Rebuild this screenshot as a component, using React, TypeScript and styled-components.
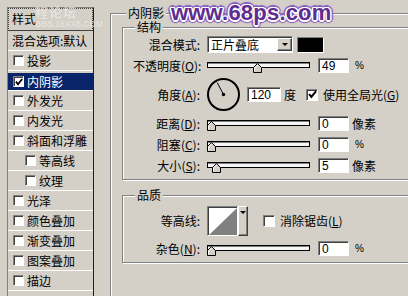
import React from "react";
import styled, { createGlobalStyle } from "styled-components";

const FACE = "#d4d0c8";
const CJK = '"Noto Sans CJK SC", "Noto Sans", sans-serif';

const GlobalStyle = createGlobalStyle`
  html, body { margin: 0; padding: 0; background: ${FACE}; }
  body { font-family: ${CJK}; font-size: 12px; color: #000; overflow: hidden; }
  * { box-sizing: border-box; }
`;

const Dialog = styled.div`
  position: relative;
  width: 408px;
  height: 296px;
  overflow: hidden;
  display: flex;
  background: ${FACE};
`;

/* ---------- left list ---------- */
const LeftPane = styled.div`
  width: 97px;
  flex-shrink: 0;
  padding: 7px 0 0 7px;
`;

const StyleList = styled.div`
  width: 87px;
  height: 300px;
  border-left: 1px solid #808080;
  border-top: 1px solid #808080;
  border-right: 1px solid #202020;
  display: flex;
  flex-direction: column;
`;

const ListHeader = styled.div`
  height: 23px;
  flex-shrink: 0;
  border-bottom: 1px solid #404040;
  outline: 1px dotted #404040;
  outline-offset: -1px;
  display: flex;
  align-items: center;
  padding-left: 4px;
  line-height: 1;
`;

const ListRow = styled.div<{ $pad: number; $selected?: boolean }>`
  height: 20px;
  flex-shrink: 0;
  border-bottom: 1px solid #fff;
  display: flex;
  align-items: center;
  gap: 3px;
  padding-left: ${(p) => p.$pad}px;
  line-height: 1;
  white-space: nowrap;
  color: ${(p) => (p.$selected ? "#fff" : "#000")};
  background: ${(p) => (p.$selected ? "#0a246a" : "transparent")};
  box-shadow: ${(p) => (p.$selected ? `inset 0 2px 0 ${FACE}` : "none")};
  padding-top: ${(p) => (p.$selected ? "2px" : "0")};
`;

const Box = styled.span<{ $size: number }>`
  display: inline-flex;
  align-items: center;
  justify-content: center;
  width: ${(p) => p.$size}px;
  height: ${(p) => p.$size}px;
  flex-shrink: 0;
  background: #fff;
  border: 1px solid;
  border-color: #808080 #fff #fff #808080;
  box-shadow: inset 1px 1px 0 #404040;
`;

function Check({ checked, size = 11 }: { checked?: boolean; size?: number }) {
  return (
    <Box $size={size}>
      {checked && (
        <svg width={size - 3} height={size - 3} viewBox="0 0 8 8">
          <path d="M1 3.6 L3 6.2 L7.2 1" fill="none" stroke="#000" strokeWidth="1.8" />
        </svg>
      )}
    </Box>
  );
}

/* ---------- right panel ---------- */
const RightPane = styled.div`
  flex: 1;
  min-width: 0;
  padding: 6px 0 0 13px;
`;

const Group = styled.fieldset<{ $w: number; $pad: string; $mt?: number }>`
  margin: ${(p) => p.$mt ?? 0}px 0 0 0;
  width: ${(p) => p.$w}px;
  min-width: 0;
  padding: ${(p) => p.$pad};
  border: 1px solid #808080;
  box-shadow: inset 1px 1px 0 #fff, 1px 1px 0 #fff;
`;

const OuterGroup = styled(Group)`
  height: 330px;
`;

const Legend = styled.legend<{ $ml: number }>`
  padding: 0 2px;
  margin-left: ${(p) => p.$ml}px;
  height: 14px;
  line-height: 14px;
  background: ${FACE};
`;

const Rows = styled.div`
  display: flex;
  flex-direction: column;
  gap: 4px;
`;

const Row = styled.div<{ $h?: number }>`
  height: ${(p) => p.$h ?? 17}px;
  display: flex;
  align-items: center;
  white-space: nowrap;
  line-height: 1;
`;

const Label = styled.span`
  width: 67px;
  flex-shrink: 0;
  margin-right: 7px;
  text-align: right;
  white-space: nowrap;
  direction: rtl;
  unicode-bidi: plaintext;
`;

const LabelInner = styled.span`
  direction: ltr;
  unicode-bidi: isolate;
`;

const Key = styled.span`
  text-decoration: underline;
`;

const Sunken = styled.div`
  background: #fff;
  border: 1px solid;
  border-color: #808080 #fff #fff #808080;
  box-shadow: inset 1px 1px 0 #404040;
`;

const Select = styled(Sunken)`
  width: 86px;
  height: 17px;
  display: flex;
  align-items: center;
  padding-left: 3px;
`;

const DropButton = styled.div<{ $w: number; $h: number }>`
  width: ${(p) => p.$w}px;
  height: ${(p) => p.$h}px;
  margin-left: auto;
  flex-shrink: 0;
  background: ${FACE};
  border: 1px solid;
  border-color: #fff #404040 #404040 #fff;
  box-shadow: inset -1px -1px 0 #808080;
  display: flex;
  justify-content: center;
  padding-top: 4px;
`;

const Arrow = styled.span`
  width: 0;
  height: 0;
  border-left: 3px solid transparent;
  border-right: 3px solid transparent;
  border-top: 3px solid #000;
`;

const Swatch = styled.div`
  width: 27px;
  height: 16px;
  margin-left: 4px;
  background: #000;
  border: 1px solid;
  border-color: #808080 #fff #fff #808080;
`;

const SliderBox = styled.div`
  position: relative;
  width: 103px;
  height: 17px;
  flex-shrink: 0;
`;

const Track = styled.div`
  margin-top: 5px;
  height: 6px;
  background: #f6f6f6;
  border: 1px solid #000;
  box-shadow: inset 0 1px 0 #808080;
`;

const ThumbSvg = styled.svg`
  position: absolute;
  top: 6px;
`;

function Slider({ value, max }: { value: number; max: number }) {
  const left = Math.round((value / max) * (103 - 9));
  return (
    <SliderBox>
      <Track />
      <ThumbSvg width="9" height="10" viewBox="0 0 9 10" style={{ left }}>
        <path d="M0.5 9.5 V4.5 L4.5 0.5 L8.5 4.5 V9.5 Z" fill={FACE} stroke="#000" />
        <path d="M1.5 8.5 V4.9 L4.5 1.9" fill="none" stroke="#fff" />
      </ThumbSvg>
    </SliderBox>
  );
}

const NumInput = styled(Sunken)<{ $w?: number; $ml?: number }>`
  width: ${(p) => p.$w ?? 31}px;
  height: 15px;
  margin-left: ${(p) => p.$ml ?? 8}px;
  padding-left: 3px;
  display: flex;
  align-items: center;
  font-family: "Liberation Sans", Arial, sans-serif;
  font-size: 12px;
  flex-shrink: 0;
`;

const Unit = styled.span<{ $ml: number }>`
  margin-left: ${(p) => p.$ml}px;
`;

const PercentUnit = styled(Unit)`
  font-family: "Liberation Sans", Arial, sans-serif;
  font-size: 10px;
`;

const ContourBox = styled(Sunken)`
  width: 31px;
  height: 30px;
  display: flex;
  padding: 1px 0 0 1px;
`;

const ContourPicker = styled.div`
  display: flex;
  width: 41px;
  flex-shrink: 0;
`;

const CheckWrap = styled.span<{ $ml: number }>`
  display: inline-flex;
  align-items: center;
  gap: 5px;
  margin-left: ${(p) => p.$ml}px;
`;

/* ---------- watermarks ---------- */
const Watermark = styled.div`
  position: absolute;
  left: 171px;
  top: 1px;
  font-family: "Liberation Sans", Arial, sans-serif;
  font-weight: bold;
  font-size: 22px;
  line-height: 24px;
  letter-spacing: 0.2px;
  color: #5e2d8e;
  pointer-events: none;
  text-shadow:
    -1px -1px 0 #fff, 1px -1px 0 #fff, -1px 1px 0 #fff, 1px 1px 0 #fff,
    0 -1.5px 0 #fff, 0 1.5px 0 #fff, -1.5px 0 0 #fff, 1.5px 0 0 #fff,
    -2px -2px 1px #8a5cc0, 2px -2px 1px #8a5cc0, -2px 2px 1px #8a5cc0, 2px 2px 1px #8a5cc0,
    0 -3px 1px #8a5cc0, 0 3px 1px #8a5cc0, -3px 0 1px #8a5cc0, 3px 0 1px #8a5cc0;
`;

const FaintMark = styled.div`
  position: absolute;
  left: 35px;
  top: 5px;
  display: flex;
  flex-direction: column;
  color: #f4f2ee;
  opacity: 0.6;
  pointer-events: none;
  line-height: 1;
  text-shadow: 0 0 1px #b8b4ac;
`;

const FaintBig = styled.span`
  font-size: 13px;
  font-weight: bold;
  letter-spacing: 1px;
`;

const FaintSmall = styled.span`
  margin-top: 2px;
  font-family: "Liberation Sans", Arial, sans-serif;
  font-size: 8.5px;
  font-weight: bold;
`;

const items: { label: string; noBox?: boolean; checked?: boolean; selected?: boolean; indent?: boolean }[] = [
  { label: "混合选项:默认", noBox: true },
  { label: "投影" },
  { label: "内阴影", checked: true, selected: true },
  { label: "外发光" },
  { label: "内发光" },
  { label: "斜面和浮雕" },
  { label: "等高线", indent: true },
  { label: "纹理", indent: true },
  { label: "光泽" },
  { label: "颜色叠加" },
  { label: "渐变叠加" },
  { label: "图案叠加" },
  { label: "描边" },
];

function L({ text, k }: { text: string; k?: string }) {
  return (
    <Label>
      <LabelInner>
        {text}
        {k ? (
          <>
            (<Key>{k}</Key>)
          </>
        ) : null}
        :
      </LabelInner>
    </Label>
  );
}

export default function App() {
  return (
    <Dialog>
      <GlobalStyle />
      <LeftPane>
        <StyleList>
          <ListHeader>样式</ListHeader>
          {items.map((it) => (
            <ListRow key={it.label} $pad={it.noBox ? 4 : it.indent ? 17 : 5} $selected={it.selected}>
              {!it.noBox && <Check checked={it.checked} />}
              <span>{it.label}</span>
            </ListRow>
          ))}
        </StyleList>
      </LeftPane>

      <RightPane>
        <OuterGroup $w={330} $pad="0 0 0 11px">
          <Legend $ml={4}>内阴影</Legend>
          <Group $w={300} $pad="2px 0 5px 10px">
            <Legend $ml={2}>结构</Legend>
            <Rows>
              <Row>
                <L text="混合模式" />
                <Select>
                  正片叠底
                  <DropButton $w={15} $h={13}>
                    <Arrow />
                  </DropButton>
                </Select>
                <Swatch />
              </Row>
              <Row>
                <L text="不透明度" k="O" />
                <Slider value={49} max={100} />
                <NumInput>49</NumInput>
                <PercentUnit $ml={6}>%</PercentUnit>
              </Row>
              <Row $h={33}>
                <L text="角度" k="A" />
                <svg width="33" height="33" viewBox="0 0 33 33">
                  <circle cx="16.5" cy="16.5" r="15.5" fill="none" stroke="#000" strokeWidth="2" />
                  <line x1="16.5" y1="16.5" x2="10.2" y2="4.6" stroke="#000" strokeWidth="1" />
                  <circle cx="16.5" cy="16.5" r="1.7" fill="#000" />
                </svg>
                <NumInput $w={34} $ml={7}>120</NumInput>
                <Unit $ml={3}>度</Unit>
                <CheckWrap $ml={10}>
                  <Check checked size={12} />
                  <span>
                    使用全局光(<Key>G</Key>)
                  </span>
                </CheckWrap>
              </Row>
              <Row>
                <L text="距离" k="D" />
                <Slider value={0} max={100} />
                <NumInput>0</NumInput>
                <Unit $ml={3}>像素</Unit>
              </Row>
              <Row>
                <L text="阻塞" k="C" />
                <Slider value={0} max={100} />
                <NumInput>0</NumInput>
                <PercentUnit $ml={6}>%</PercentUnit>
              </Row>
              <Row>
                <L text="大小" k="S" />
                <Slider value={5} max={100} />
                <NumInput>5</NumInput>
                <Unit $ml={3}>像素</Unit>
              </Row>
            </Rows>
          </Group>

          <Group $w={300} $pad="4px 0 5px 10px" $mt={8}>
            <Legend $ml={2}>品质</Legend>
            <Rows>
              <Row $h={30}>
                <L text="等高线" />
                <ContourPicker>
                  <ContourBox>
                    <svg width="28" height="27" viewBox="0 0 28 27">
                      <rect width="28" height="27" fill="#fff" />
                      <polygon points="0,27 28,0 28,27" fill="#808080" />
                    </svg>
                  </ContourBox>
                  <DropButton $w={10} $h={30}>
                    <Arrow />
                  </DropButton>
                </ContourPicker>
                <CheckWrap $ml={15}>
                  <Check size={12} />
                  <span>
                    消除锯齿(<Key>L</Key>)
                  </span>
                </CheckWrap>
              </Row>
              <Row>
                <L text="杂色" k="N" />
                <Slider value={0} max={100} />
                <NumInput>0</NumInput>
                <PercentUnit $ml={6}>%</PercentUnit>
              </Row>
            </Rows>
          </Group>
        </OuterGroup>
      </RightPane>

      <FaintMark>
        <FaintBig>程论坛</FaintBig>
        <FaintSmall>BBS.16XX8.COM</FaintSmall>
      </FaintMark>
      <Watermark>www.68ps.com</Watermark>
    </Dialog>
  );
}
